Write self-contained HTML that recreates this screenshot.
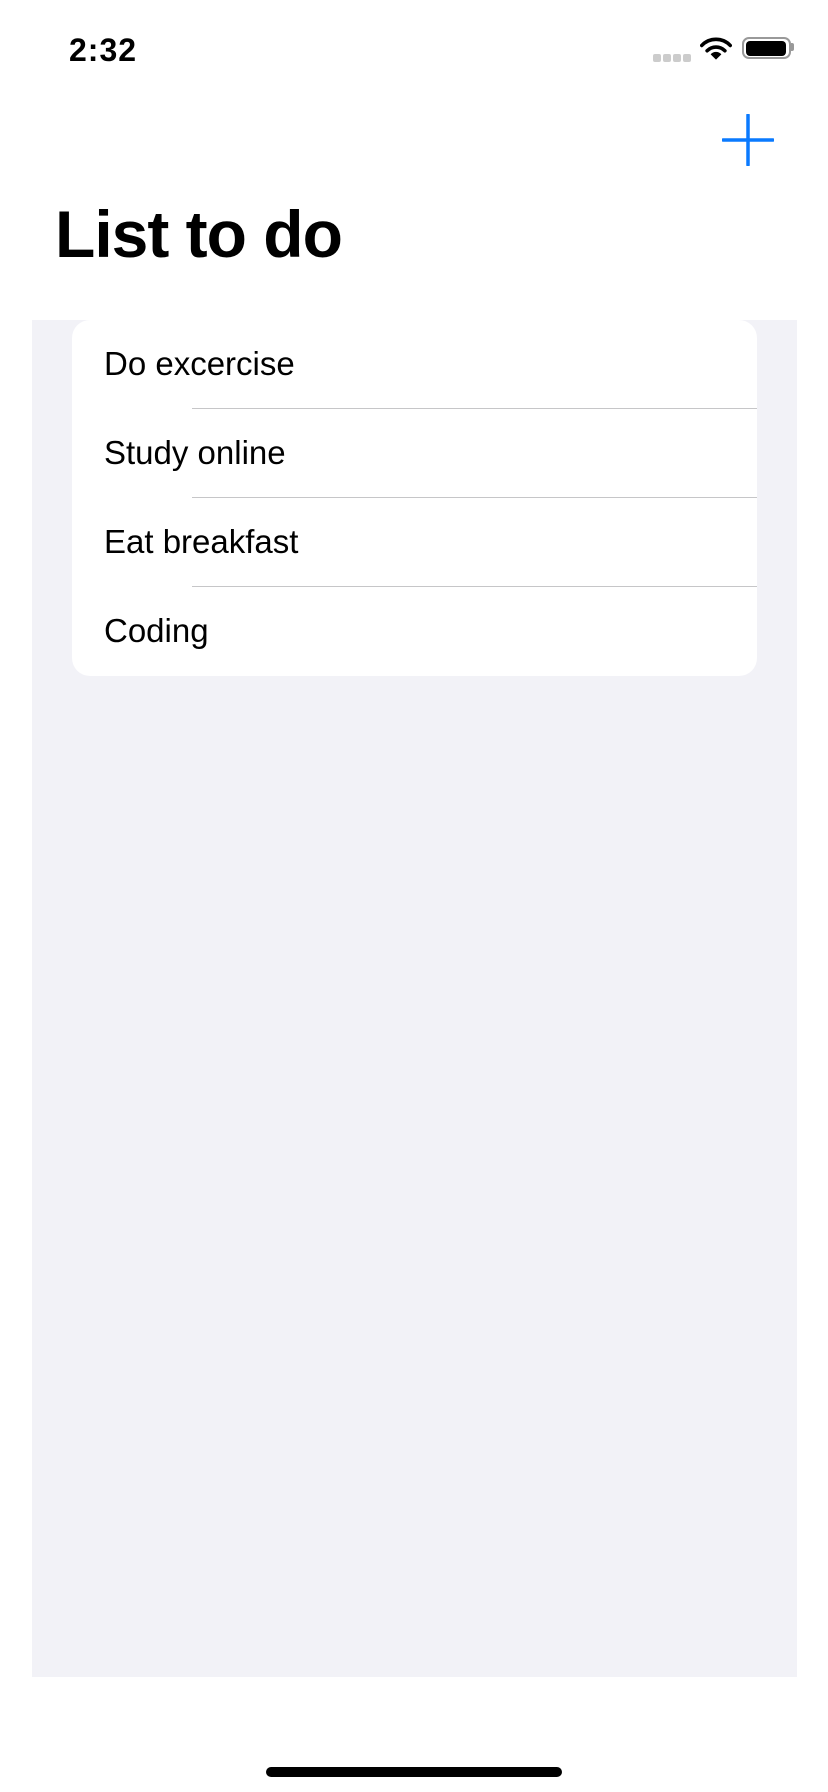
<!DOCTYPE html>
<html><head><meta charset="utf-8"><style>
body{margin:0;width:828px;height:1792px;background:#fff;position:relative;overflow:hidden;font-family:"Liberation Sans",sans-serif}
.abs{position:absolute}
.row{position:absolute;left:104px;font-size:33px;color:#000;line-height:1}
.sep{position:absolute;left:192px;right:0;height:1px;background:#c6c6c8}
</style></head><body>
<div class="abs" style="left:69px;top:32px;font-size:32px;font-weight:bold;letter-spacing:1px">2:32</div>
<div class="abs" style="left:653px;top:54px;width:8px;height:8px;border-radius:2px;background:#ccc"></div>
<div class="abs" style="left:663px;top:54px;width:8px;height:8px;border-radius:2px;background:#ccc"></div>
<div class="abs" style="left:673px;top:54px;width:8px;height:8px;border-radius:2px;background:#ccc"></div>
<div class="abs" style="left:683px;top:54px;width:8px;height:8px;border-radius:2px;background:#ccc"></div>
<svg class="abs" style="left:700px;top:37px" width="32" height="24" viewBox="0 0 36 26"><path d="M2 9 A22 22 0 0 1 34 9" stroke="#000" stroke-width="4" fill="none" stroke-linecap="round"/><path d="M8 15 A14 14 0 0 1 28 15" stroke="#000" stroke-width="4" fill="none" stroke-linecap="round"/><path d="M18 25 L12 19 A8 8 0 0 1 24 19 Z" fill="#000"/></svg>
<div class="abs" style="left:742px;top:37px;width:45px;height:18px;border:2.5px solid #999;border-radius:7px"></div>
<div class="abs" style="left:746px;top:41px;width:40px;height:15px;background:#000;border-radius:4px"></div>
<div class="abs" style="left:791px;top:43px;width:3px;height:8px;background:#999;border-radius:0 2px 2px 0"></div>
<svg class="abs" style="left:722px;top:114px" width="52" height="52"><path d="M26 1V51M1 26H51" stroke="#0a7aff" stroke-width="3.5" stroke-linecap="round"/></svg>
<div class="abs" style="left:55px;top:196px;font-size:66px;font-weight:bold;letter-spacing:-1px">List to do</div>
<div class="abs" style="left:32px;top:320px;width:765px;height:1357px;background:#f2f2f7"></div>
<div class="abs" style="left:72px;top:320px;width:685px;height:356px;background:#fff;border-radius:18px">
<div class="row" style="left:32px;top:27px">Do excercise</div>
<div class="sep" style="top:88px;left:120px"></div>
<div class="row" style="left:32px;top:116px">Study online</div>
<div class="sep" style="top:177px;left:120px"></div>
<div class="row" style="left:32px;top:205px">Eat breakfast</div>
<div class="sep" style="top:266px;left:120px"></div>
<div class="row" style="left:32px;top:294px">Coding</div>
</div>
<div class="abs" style="left:266px;top:1767px;width:296px;height:10px;background:#000;border-radius:5px"></div>
</body></html>
